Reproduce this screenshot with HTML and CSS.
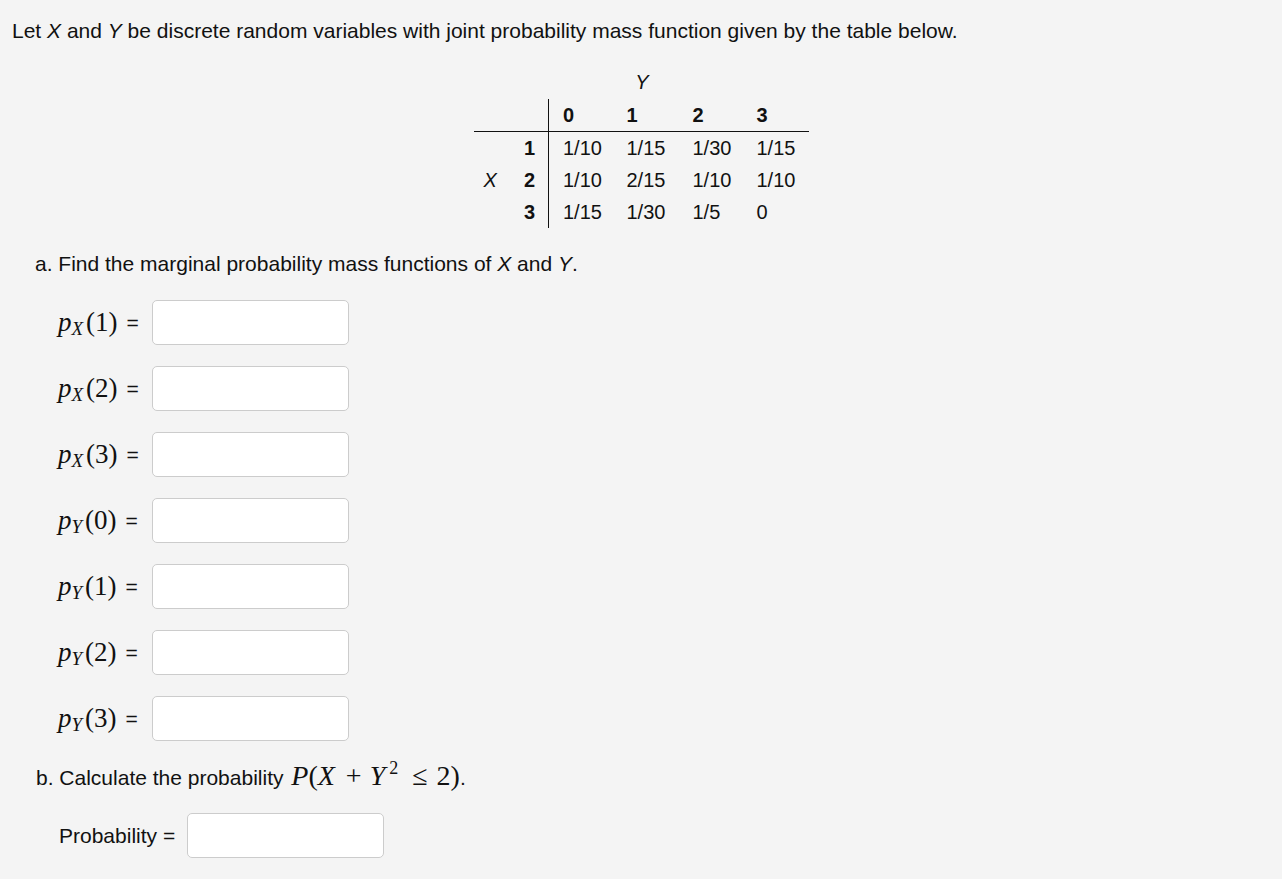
FILE: index.html
```html
<!DOCTYPE html>
<html>
<head>
<meta charset="utf-8">
<link rel="stylesheet" href="styles.css">
</head>
<body>
<div class="page">
  <p class="intro">Let <i>X</i> and <i>Y</i> be discrete random variables with joint probability mass function given by the table below.</p>

  <div class="table-wrap">
    <div class="ylabel"><i>Y</i></div>
    <table class="pmf">
      <tr class="head">
        <td class="xcol"></td><td class="rlab"></td>
        <td class="d first">0</td><td class="d">1</td><td class="d">2</td><td class="d last">3</td>
      </tr>
      <tr>
        <td class="xcol"></td><td class="rlab">1</td>
        <td class="d first">1/10</td><td class="d">1/15</td><td class="d">1/30</td><td class="d last">1/15</td>
      </tr>
      <tr>
        <td class="xcol"><i>X</i></td><td class="rlab">2</td>
        <td class="d first">1/10</td><td class="d">2/15</td><td class="d">1/10</td><td class="d last">1/10</td>
      </tr>
      <tr>
        <td class="xcol"></td><td class="rlab">3</td>
        <td class="d first">1/15</td><td class="d">1/30</td><td class="d">1/5</td><td class="d last">0</td>
      </tr>
    </table>
  </div>

  <p class="part">a. Find the marginal probability mass functions of <i>X</i> and <i>Y</i>.</p>

  <div class="rows">
    <div class="row"><span class="label"><span class="math"><i>p</i><sub><i>X</i></sub>(1)</span><span class="eq">=</span></span><span class="box"></span></div>
    <div class="row"><span class="label"><span class="math"><i>p</i><sub><i>X</i></sub>(2)</span><span class="eq">=</span></span><span class="box"></span></div>
    <div class="row"><span class="label"><span class="math"><i>p</i><sub><i>X</i></sub>(3)</span><span class="eq">=</span></span><span class="box"></span></div>
    <div class="row"><span class="label"><span class="math"><i>p</i><sub><i>Y</i></sub>(0)</span><span class="eq">=</span></span><span class="box"></span></div>
    <div class="row"><span class="label"><span class="math"><i>p</i><sub><i>Y</i></sub>(1)</span><span class="eq">=</span></span><span class="box"></span></div>
    <div class="row"><span class="label"><span class="math"><i>p</i><sub><i>Y</i></sub>(2)</span><span class="eq">=</span></span><span class="box"></span></div>
    <div class="row"><span class="label"><span class="math"><i>p</i><sub><i>Y</i></sub>(3)</span><span class="eq">=</span></span><span class="box"></span></div>
  </div>

  <p class="part partb">b. Calculate the probability <span class="math big"><i>P</i>(<i>X</i><span class="op">+</span><i>Y</i><sup>2</sup><span class="op rel">≤</span>2)</span>.</p>

  <div class="row prob"><span class="plabel">Probability =</span><span class="box"></span></div>
</div>
</body>
</html>
```
FILE: styles.css
```css
html, body {
  margin: 0;
  padding: 0;
  background: #f4f4f4;
}
body {
  font-family: "Liberation Sans", Arial, sans-serif;
  font-size: 21px;
  color: #111;
}
.page {
  padding: 18px 12px 0 12px;
}
p {
  margin: 0;
}
.intro {
  line-height: 26px;
}
.table-wrap {
  display: flex;
  flex-direction: column;
  align-items: center;
  margin-top: 26px;
  font-size: 20px;
}
.ylabel {
  line-height: 24px;
  height: 24px;
  padding-left: 2px;
}
.pmf {
  border-collapse: collapse;
  margin-top: 5px;
}
.pmf td {
  padding: 0;
  height: 32px;
  line-height: 32px;
  vertical-align: middle;
}
.pmf .xcol {
  width: 40px;
  text-align: left;
  padding-left: 10px;
  box-sizing: border-box;
}
.pmf .rlab {
  width: 35px;
  text-align: right;
  padding-right: 13px;
  box-sizing: border-box;
  font-weight: bold;
}
.pmf .d {
  width: 66px;
  padding-left: 12px;
  box-sizing: border-box;
}
.pmf .d.first {
  border-left: 1px solid #111;
  padding-left: 14px;
}
.pmf .d.last {
  width: 62px;
  padding-left: 10px;
}
.pmf .head td {
  font-weight: bold;
  border-bottom: 1px solid #111;
  height: 31px;
}
.part {
  margin-top: 23px;
  padding-left: 23px;
  line-height: 26px;
}
.rows {
  display: flex;
  flex-direction: column;
  gap: 21px;
  margin-top: 23px;
  padding-left: 46px;
}
.row {
  display: flex;
  align-items: center;
  height: 45px;
}
.label {
  display: flex;
  align-items: center;
  width: 94px;
}
.math {
  font-family: "Liberation Serif", "Times New Roman", serif;
  font-size: 27px;
  color: #111;
  white-space: nowrap;
}
.math sub {
  font-size: 19px;
  vertical-align: -4px;
  line-height: 0;
  margin-right: 3px;
}
.math sup {
  font-size: 18px;
  vertical-align: 11px;
  line-height: 0;
  margin-left: 4px;
}
.eq {
  margin-left: 9px;
}
.box {
  display: block;
  width: 197px;
  height: 45px;
  box-sizing: border-box;
  background: #fff;
  border: 1px solid #ccc;
  border-radius: 5px;
}
.partb {
  margin-top: 22px;
  padding-left: 24px;
}
.math.big {
  font-size: 28px;
  margin-left: 2px;
}
.op {
  margin: 0 8px 0 11px;
}
.op.rel {
  margin: 0 9px 0 14px;
}
.prob {
  margin-top: 22px;
  padding-left: 47px;
}
.plabel {
  margin-right: 12px;
}
```
